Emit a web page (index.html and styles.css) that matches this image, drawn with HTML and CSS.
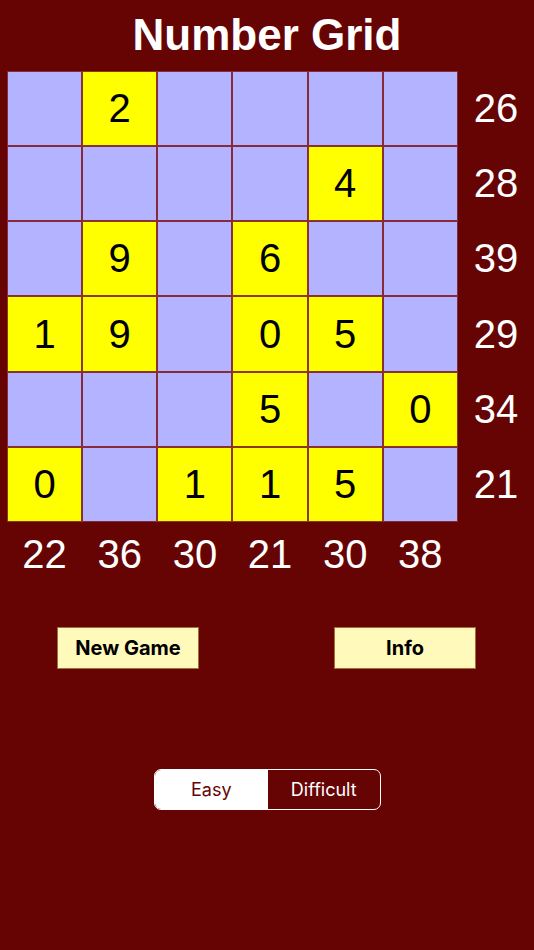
FILE: index.html
```html
<!DOCTYPE html>
<html>
<head>
<meta charset="utf-8">
<link rel="stylesheet" href="styles.css">
</head>
<body>
<div class="app">
  <h1 class="title">Number Grid</h1>
  <div class="board">
    <div class="cell"></div><div class="cell on">2</div><div class="cell"></div><div class="cell"></div><div class="cell"></div><div class="cell"></div><div class="sum">26</div>
    <div class="cell"></div><div class="cell"></div><div class="cell"></div><div class="cell"></div><div class="cell on">4</div><div class="cell"></div><div class="sum">28</div>
    <div class="cell"></div><div class="cell on">9</div><div class="cell"></div><div class="cell on">6</div><div class="cell"></div><div class="cell"></div><div class="sum">39</div>
    <div class="cell on">1</div><div class="cell on">9</div><div class="cell"></div><div class="cell on">0</div><div class="cell on">5</div><div class="cell"></div><div class="sum">29</div>
    <div class="cell"></div><div class="cell"></div><div class="cell"></div><div class="cell on">5</div><div class="cell"></div><div class="cell on">0</div><div class="sum">34</div>
    <div class="cell on">0</div><div class="cell"></div><div class="cell on">1</div><div class="cell on">1</div><div class="cell on">5</div><div class="cell"></div><div class="sum">21</div>
    <div class="sum col">22</div><div class="sum col">36</div><div class="sum col">30</div><div class="sum col">21</div><div class="sum col">30</div><div class="sum col">38</div><div class="sum col"></div>
  </div>
  <div class="actions">
    <button class="btn">New Game</button>
    <button class="btn">Info</button>
  </div>
  <div class="segwrap">
    <div class="seg">
      <div class="seg-item active">Easy</div>
      <div class="seg-item">Difficult</div>
    </div>
  </div>
</div>
</body>
</html>
```
FILE: styles.css
```css
html, body {
  margin: 0;
  padding: 0;
  background: #660404;
}
.app {
  width: 534px;
  height: 950px;
  background: #660404;
  font-family: "Liberation Sans", Arial, sans-serif;
}
.title {
  margin: 0;
  padding-top: 13px;
  height: 71px;
  box-sizing: border-box;
  font-size: 44px;
  line-height: 44px;
  font-weight: bold;
  color: #ffffff;
  text-align: center;
}
.board {
  display: grid;
  padding-left: 7px;
  grid-template-columns: repeat(6, 75.17px) 1fr;
  grid-template-rows: repeat(6, 75.17px) 65px;
}
.cell {
  box-sizing: border-box;
  border: 1px solid #862a3c;
  background: #b3b3ff;
  display: flex;
  align-items: center;
  justify-content: center;
  font-size: 40px;
  color: #000;
}
.cell.on {
  background: #ffff00;
  border-color: #8a3a1c;
}
.sum {
  display: flex;
  align-items: center;
  justify-content: center;
  font-size: 40px;
  color: #ffffff;
}
.actions {
  display: flex;
  justify-content: space-between;
  padding: 0 58px 0 57px;
  margin-top: 40px;
}
.btn {
  width: 142px;
  height: 42px;
  background: #fff9bb;
  border: 1px solid #a0703c;
  border-radius: 0;
  font-family: Inter, "Liberation Sans", sans-serif;
  font-size: 20px;
  font-weight: 700;
  color: #000;
  padding: 0;
}
.segwrap {
  display: flex;
  justify-content: center;
  margin-top: 100px;
}
.seg {
  display: flex;
  width: 227px;
  height: 41px;
  box-sizing: border-box;
  border: 1px solid #ffffff;
  border-radius: 7px;
  overflow: hidden;
  margin-left: 1px;
}
.seg-item {
  flex: 1;
  display: flex;
  align-items: center;
  justify-content: center;
  font-family: Inter, "Liberation Sans", sans-serif;
  font-size: 18px;
  color: #ffffff;
}
.seg-item.active {
  background: #ffffff;
  color: #660404;
}
```
